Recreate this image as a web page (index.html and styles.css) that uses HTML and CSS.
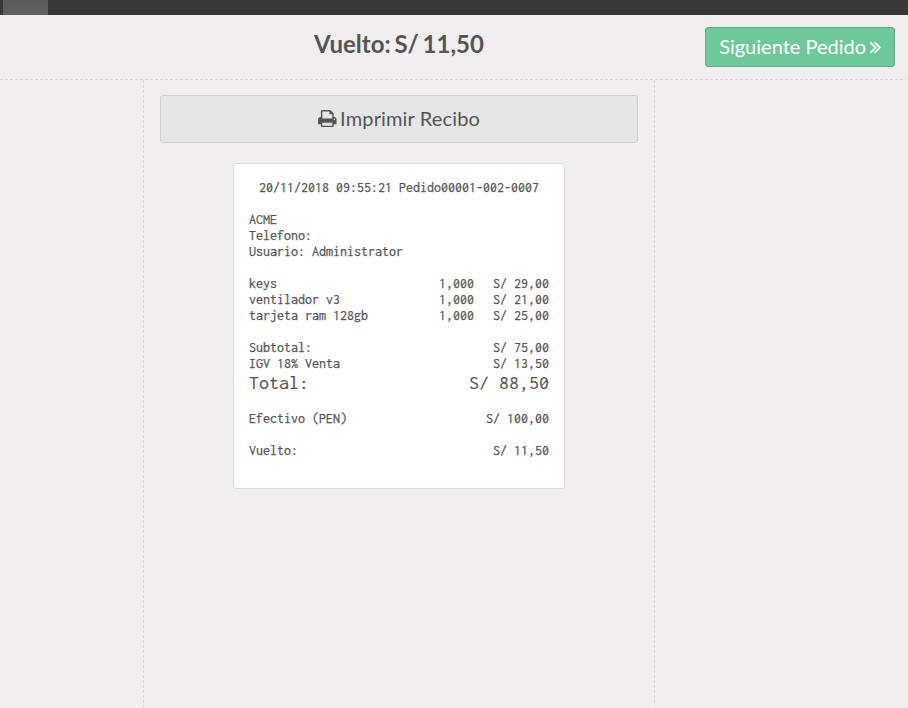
FILE: index.html
```html
<!DOCTYPE html>
<html lang="es">
<head>
<meta charset="utf-8">
<title>Recibo</title>
<link rel="stylesheet" href="styles.css">
</head>
<body>
<div class="pos">
  <div class="topbar"><div class="topbar-tab"></div></div>
  <header class="heading">
    <h1 class="change">Vuelto: S/ 11,50</h1>
    <button class="next"><span class="next-label">Siguiente Pedido</span><svg class="angles" viewBox="397 461 966 998"><path fill="currentColor" stroke="currentColor" stroke-width="30" d="M979 960q0 13-10 23l-466 466q-10 10-23 10t-23-10l-50-50q-10-10-10-23t10-23l393-393-393-393q-10-10-10-23t10-23l50-50q10-10 23-10t23 10l466 466q10 10 10 23zm384 0q0 13-10 23l-466 466q-10 10-23 10t-23-10l-50-50q-10-10-10-23t10-23l393-393-393-393q-10-10-10-23t10-23l50-50q10-10 23-10t23 10l466 466q10 10 10 23z"/></svg></button>
  </header>
  <div class="columns">
    <main class="center">
      <button class="print"><svg class="printer" viewBox="64 128 1664 1536"><path fill="currentColor" d="M448 1536h896v-256h-896v256zm0-640h896v-384h-160q-40 0-68-28t-28-68v-160h-640v640zm1152 64q0-26-19-45t-45-19-45 19-19 45 19 45 45 19 45-19 19-45zm128 0v416q0 13-9.500 22.500t-22.500 9.500h-224v160q0 40-28 68t-68 28h-960q-40 0-68-28t-28-68v-160h-224q-13 0-22.500-9.500t-9.500-22.500v-416q0-79 56.500-135.500t135.500-56.500h64v-544q0-40 28-68t68-28h672q40 0 88 20t76 48l152 152q28 28 48 76t20 88v256h64q79 0 135.500 56.500t56.500 135.500z"/></svg><span class="print-label">Imprimir Recibo</span></button>
      <section class="ticket">
        <div class="meta">20/11/2018 09:55:21 Pedido00001-002-0007</div>
        <div class="block">
          <div>ACME</div>
          <div>Telefono:</div>
          <div>Usuario: Administrator</div>
        </div>
        <div class="block">
          <div class="row"><span class="name">keys</span><span>1,000</span><span class="price">S/ 29,00</span></div>
          <div class="row"><span class="name">ventilador v3</span><span>1,000</span><span class="price">S/ 21,00</span></div>
          <div class="row"><span class="name">tarjeta ram 128gb</span><span>1,000</span><span class="price">S/ 25,00</span></div>
        </div>
        <div class="block">
          <div class="row"><span class="name">Subtotal:</span><span>S/ 75,00</span></div>
          <div class="row"><span class="name">IGV 18% Venta</span><span>S/ 13,50</span></div>
          <div class="row total"><span class="name">Total:</span><span>S/ 88,50</span></div>
        </div>
        <div class="block row"><span class="name">Efectivo (PEN)</span><span>S/ 100,00</span></div>
        <div class="block row"><span class="name">Vuelto:</span><span>S/ 11,50</span></div>
      </section>
    </main>
  </div>
</div>
</body>
</html>
```
FILE: styles.css
```css
* { box-sizing: border-box; }
body {
  margin: 0;
  background: #f0eeee;
  color: #555;
  font-family: Lato, sans-serif;
}
.pos {
  height: 708px;
  display: flex;
  flex-direction: column;
  overflow: hidden;
}
.topbar {
  height: 15px;
  padding-left: 3px;
  background: #393939;
}
.topbar-tab {
  width: 45px;
  height: 15px;
  background: linear-gradient(#5c5c5c, #606060);
}
.heading {
  height: 65px;
  display: grid;
  grid-template-columns: 144px 510px 1fr;
  align-items: start;
  border-bottom: 1px dashed #d6d6d6;
}
.change {
  grid-column: 2;
  margin: 14px 0 0;
  text-align: center;
  font-size: 24px;
  line-height: 30px;
  font-weight: 700;
  word-spacing: -2px;
}
button {
  display: flex;
  align-items: center;
  justify-content: center;
  padding: 0 0 2px;
  font: 20px/24px Lato, sans-serif;
  border-radius: 3px;
  white-space: nowrap;
}
.next {
  justify-self: end;
  margin: 12px 13px 0 0;
  width: 190px;
  height: 40px;
  gap: 4px;
  color: #fff;
  background: #6ec89b;
  border: 1px solid #64af8a;
}
.angles { width: 10.8px; height: 11.1px; margin-top: 4px; overflow: visible; }
.columns {
  flex: 1;
  display: flex;
  padding-left: 143px;
}
.center {
  width: 512px;
  padding: 15px 16px 0;
  border: dashed #d6d6d6;
  border-width: 0 1px;
}
.print {
  width: 478px;
  height: 48px;
  gap: 3.5px;
  color: #555;
  background: #e5e5e5;
  border: 1px solid #cecece;
}
.print-label { letter-spacing: 0.14px; }
.printer { width: 18.6px; height: 17.1px; margin-top: 2px; }
.ticket {
  width: 332px;
  height: 326px;
  margin: 20px auto 0;
  padding: 16px 15px 0;
  background: #fff;
  border: 1px solid #dadada;
  border-radius: 3px;
  font-family: Inconsolata, "DejaVu Sans Mono", monospace;
  font-size: 14px;
  line-height: 16px;
  -webkit-text-stroke: 0.25px currentColor;
}
.meta { text-align: center; white-space: nowrap; }
.block { margin-top: 16px; }
.row { display: flex; }
.name { flex: 1; }
.price { width: 75px; text-align: right; }
.total {
  padding-bottom: 2px;
  font-size: 20px;
  line-height: 21px;
  -webkit-text-stroke-width: 0.1px;
}
```
